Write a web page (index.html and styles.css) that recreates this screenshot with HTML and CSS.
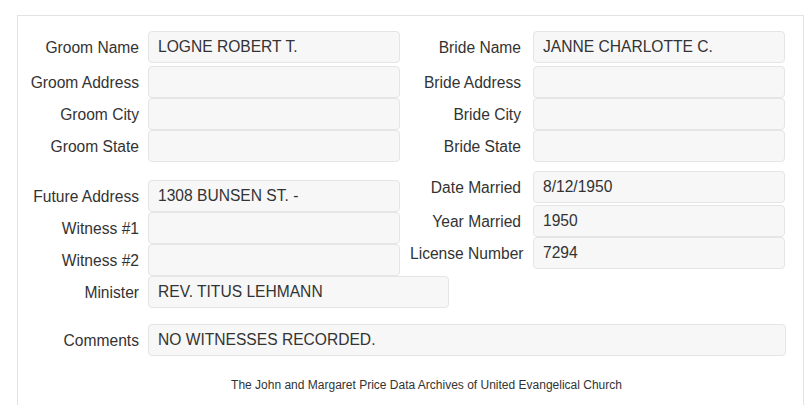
FILE: index.html
```html
<!DOCTYPE html>
<html>
<head>
<meta charset="utf-8">
<link rel="stylesheet" href="styles.css">
</head>
<body>
<div class="panel">
  <div class="section top">
    <div class="col left">
      <div class="row first"><label>Groom Name</label><div class="field">LOGNE ROBERT T.</div></div>
      <div class="row"><label>Groom Address</label><div class="field"></div></div>
      <div class="row"><label>Groom City</label><div class="field"></div></div>
      <div class="row"><label>Groom State</label><div class="field"></div></div>
    </div>
    <div class="col right">
      <div class="row first"><label>Bride Name</label><div class="field">JANNE CHARLOTTE C.</div></div>
      <div class="row"><label>Bride Address</label><div class="field"></div></div>
      <div class="row"><label>Bride City</label><div class="field"></div></div>
      <div class="row"><label>Bride State</label><div class="field"></div></div>
    </div>
  </div>
  <div class="section mid">
    <div class="col left lower">
      <div class="row"><label>Future Address</label><div class="field">1308 BUNSEN ST. -</div></div>
      <div class="row"><label>Witness #1</label><div class="field"></div></div>
      <div class="row"><label>Witness #2</label><div class="field"></div></div>
      <div class="row"><label>Minister</label><div class="field wide">REV. TITUS LEHMANN</div></div>
    </div>
    <div class="col right">
      <div class="row second"><label>Date Married</label><div class="field">8/12/1950</div></div>
      <div class="row"><label>Year Married</label><div class="field">1950</div></div>
      <div class="row"><label class="long">License Number</label><div class="field">7294</div></div>
    </div>
  </div>
  <div class="row comments"><label>Comments</label><div class="field full">NO WITNESSES RECORDED.</div></div>
  <p class="footer">The John and Margaret Price Data Archives of United Evangelical Church</p>
</div>
</body>
</html>
```

FILE: styles.css
```css
html, body {
  margin: 0;
  padding: 0;
  background: #fff;
}
body {
  font-family: "Liberation Sans", Arial, sans-serif;
  color: #333;
  font-size: 15.6px;
}
.panel {
  margin: 15px 0 0 17px;
  width: 787px;
  height: 390px;
  box-sizing: border-box;
  border: 1px solid #e3e3e3;
  border-bottom: none;
  padding: 15px 0 0 10px;
  overflow: hidden;
}
.section {
  display: flex;
  gap: 10px;
  align-items: flex-start;
}
.col {
  display: flex;
  flex-direction: column;
  flex: none;
  width: 372px;
}
.col.right {
  width: 375px;
}
.row {
  display: flex;
  align-items: center;
  height: 32px;
}
.row label {
  width: 111px;
  flex: none;
  text-align: right;
  white-space: nowrap;
  line-height: 32px;
  padding-top: 2px;
}
.row label.long {
  text-align: left;
}
.left .row label {
  margin-right: 9px;
}
.right .row label {
  margin-right: 12px;
}
.row.first {
  margin-bottom: 3px;
}
.row.second {
  margin-bottom: 2px;
}
.field {
  width: 252px;
  height: 32px;
  flex: none;
  box-sizing: border-box;
  background: #f7f7f7;
  border: 1px solid #e5e5e5;
  border-radius: 4px;
  padding: 0 9px;
  line-height: 30px;
  white-space: nowrap;
  color: #333;
}
.field.wide {
  width: 301px;
}
.mid {
  margin-top: 9px;
}
.lower {
  padding-top: 9px;
}
.comments {
  margin-top: 16px;
}
.comments label {
  margin-right: 9px;
}
.field.full {
  width: 638px;
}
.footer {
  margin: 22px 0 0 0;
  padding-left: 22px;
  text-align: center;
  font-size: 12px;
  color: #333;
}
```
